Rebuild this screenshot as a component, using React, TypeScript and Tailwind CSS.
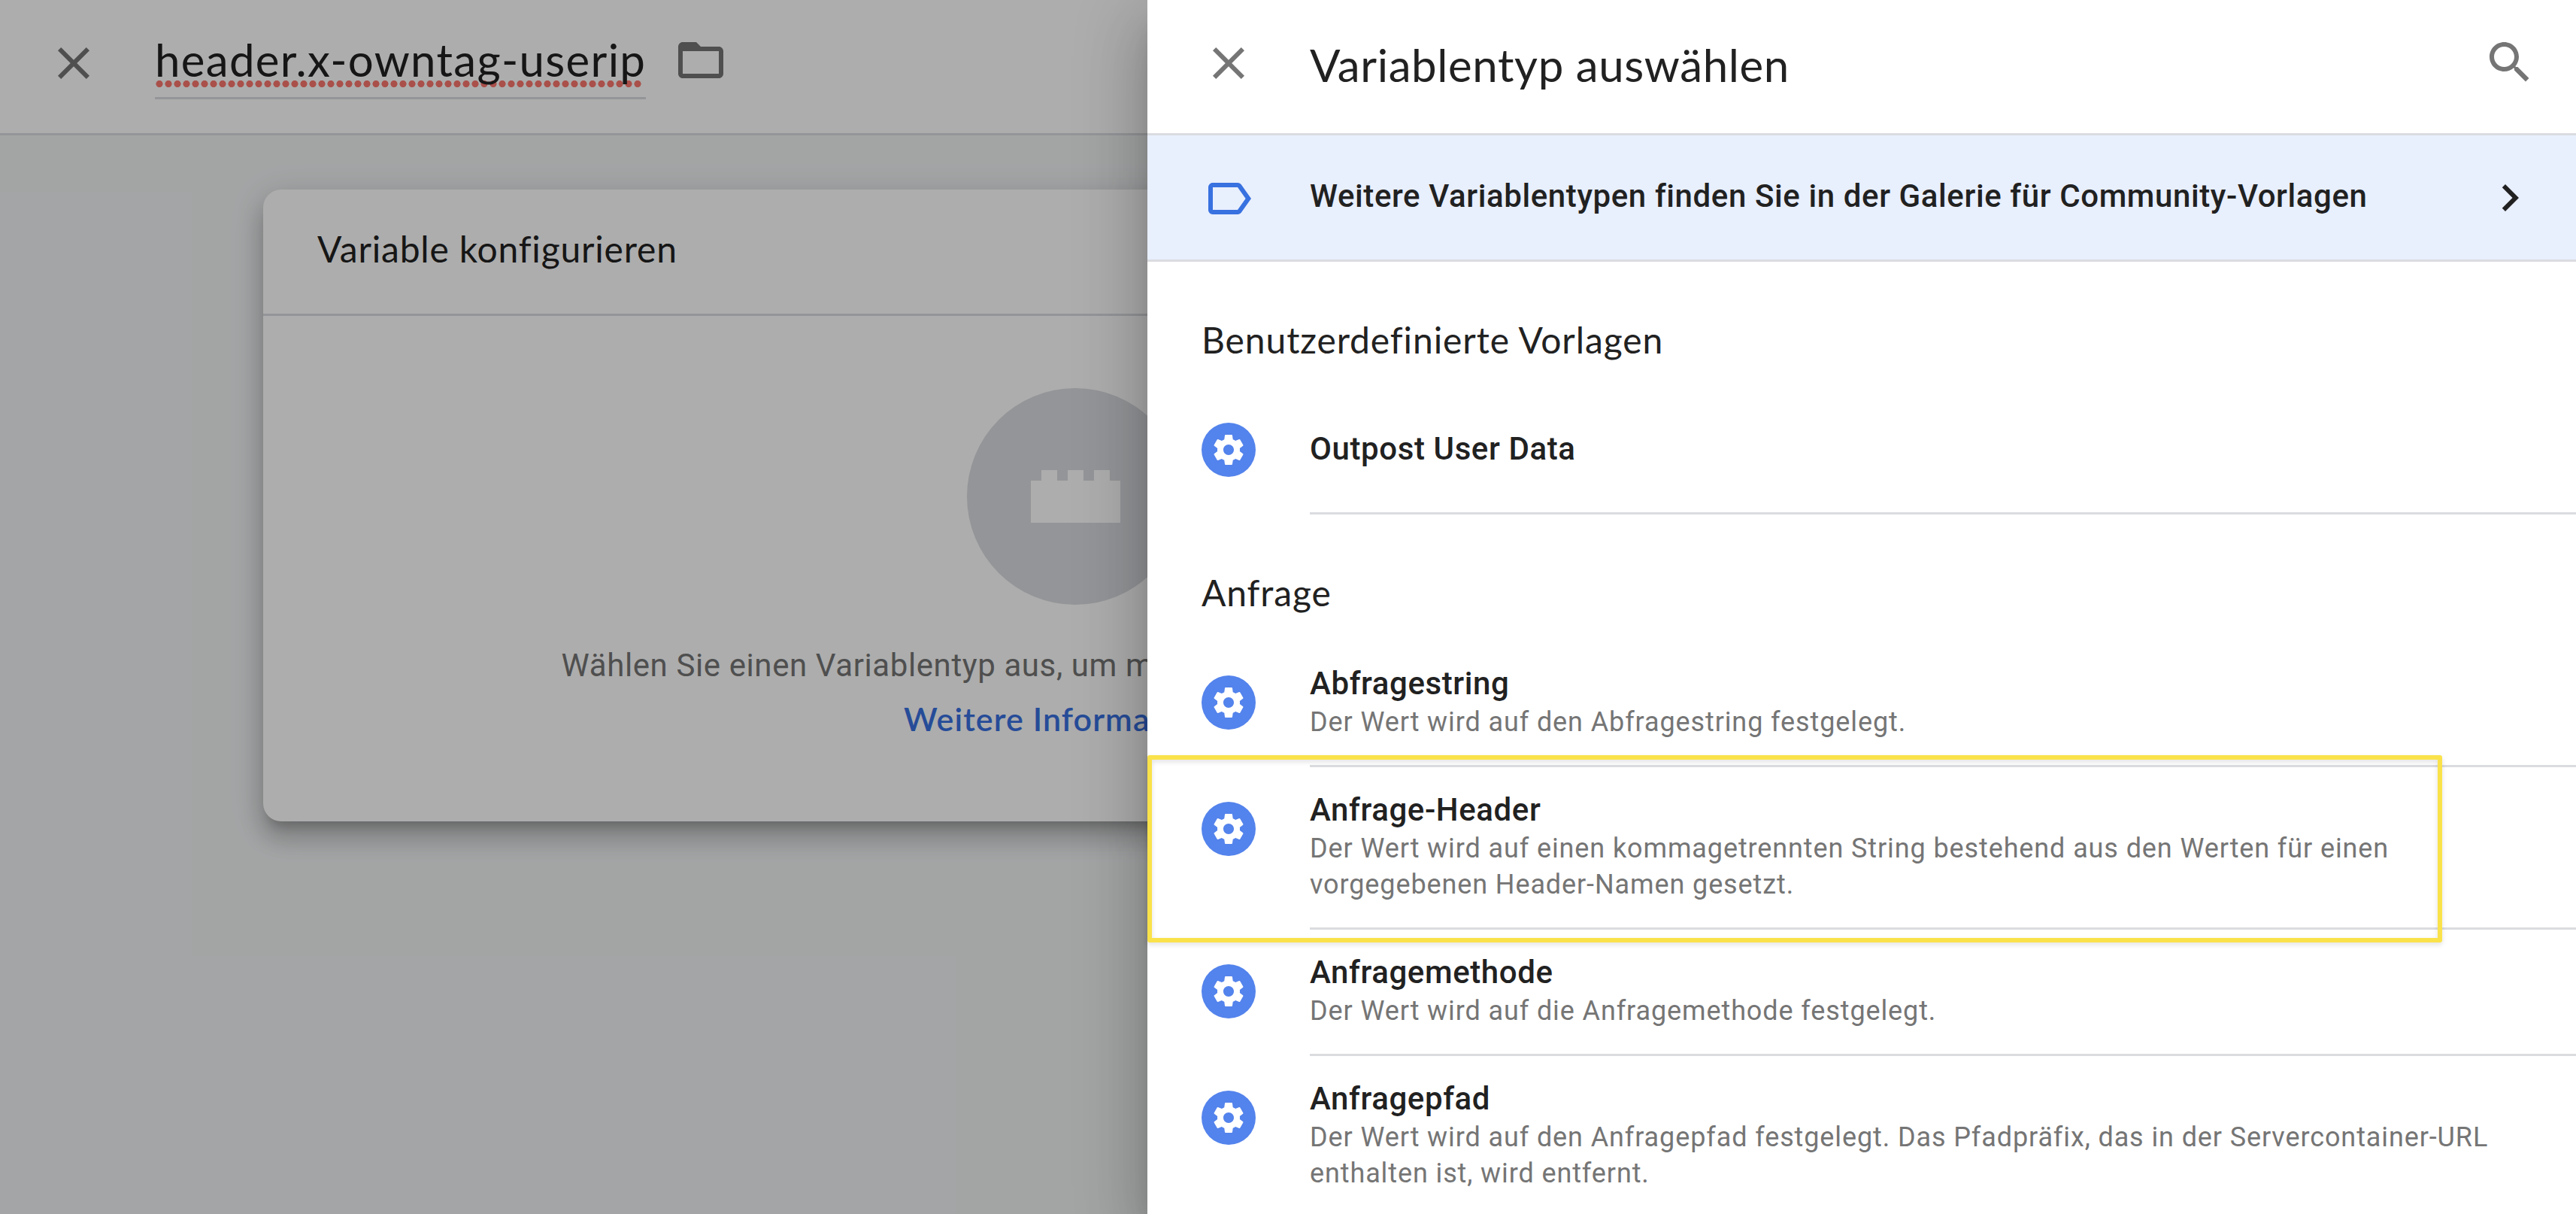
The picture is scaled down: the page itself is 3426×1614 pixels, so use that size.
import type { ReactNode } from 'react'

type VariableType = { name: string; description?: string }
type Section = { title: string; items: VariableType[] }

const sections: Section[] = [
  {
    title: 'Benutzerdefinierte Vorlagen',
    items: [{ name: 'Outpost User Data' }],
  },
  {
    title: 'Anfrage',
    items: [
      { name: 'Abfragestring', description: 'Der Wert wird auf den Abfragestring festgelegt.' },
      {
        name: 'Anfrage-Header',
        description:
          'Der Wert wird auf einen kommagetrennten String bestehend aus den Werten für einen vorgegebenen Header-Namen gesetzt.',
      },
      { name: 'Anfragemethode', description: 'Der Wert wird auf die Anfragemethode festgelegt.' },
      {
        name: 'Anfragepfad',
        description:
          'Der Wert wird auf den Anfragepfad festgelegt. Das Pfadpräfix, das in der Servercontainer-URL enthalten ist, wird entfernt.',
      },
    ],
  },
]

function Icon({ children, className }: { children: ReactNode; className: string }) {
  return (
    <svg viewBox="0 0 24 24" fill="currentColor" className={`shrink-0 ${className}`}>
      {children}
    </svg>
  )
}

function CloseIcon() {
  return (
    <Icon className="size-[72px] text-[#757575]">
      <path d="M19 6.41L17.59 5 12 10.59 6.41 5 5 6.41 10.59 12 5 17.59 6.41 19 12 13.41 17.59 19 19 17.59 13.41 12z" />
    </Icon>
  )
}

function GearBadge() {
  return (
    <span className="flex size-[72px] shrink-0 items-center justify-center rounded-full bg-[#5383ec]">
      <Icon className="size-12 text-white">
        <path d="M19.43 12.98c.04-.32.07-.64.07-.98s-.03-.66-.07-.98l2.11-1.65c.19-.15.24-.42.12-.64l-2-3.46c-.12-.22-.39-.3-.61-.22l-2.49 1c-.52-.4-1.08-.73-1.69-.98l-.38-2.65C14.46 2.18 14.25 2 14 2h-4c-.25 0-.46.18-.49.42l-.38 2.65c-.61.25-1.17.59-1.69.98l-2.49-1c-.23-.09-.49 0-.61.22l-2 3.46c-.13.22-.07.49.12.64l2.11 1.65c-.04.32-.07.65-.07.98s.03.66.07.98l-2.11 1.65c-.19.15-.24.42-.12.64l2 3.46c.12.22.39.3.61.22l2.49-1c.52.4 1.08.73 1.69.98l.38 2.65c.03.24.24.42.49.42h4c.25 0 .46-.18.49-.42l.38-2.65c.61-.25 1.17-.59 1.69-.98l2.49 1c.23.09.49 0 .61-.22l2-3.46c.12-.22.07-.49-.12-.64l-2.11-1.65zM12 15.5c-1.93 0-3.5-1.57-3.5-3.5s1.57-3.5 3.5-3.5 3.5 1.57 3.5 3.5-1.57 3.5-3.5 3.5z" />
      </Icon>
    </span>
  )
}

function Editor() {
  return (
    <div className="h-full w-[1526px] overflow-hidden bg-[#f1f3f4]">
      <header className="flex h-[180px] items-start border-b-[3px] border-[#dadce0] bg-white pl-[62px]">
        <div className="pt-12">
          <CloseIcon />
        </div>
        <div className="relative ml-[72px] h-[132px] w-[653px] border-b-[3px] border-[#dadce0] pt-[43px]">
          <div className="absolute top-[107px] left-0 h-[9px] w-[648px] bg-[radial-gradient(circle,#fb776e_4.2px,transparent_4.9px)] bg-[length:12px_9px]" />
          <h1 className="relative font-[Lato,sans-serif] text-[60px] leading-[72px] tracking-[1.3px] whitespace-nowrap">
            header.x-owntag-userip
          </h1>
        </div>
        <div className="pt-11 pl-[37px]">
          <Icon className="size-[72px] text-[#757575]">
            <path d="M20 6h-8l-2-2H4c-1.1 0-1.99.9-1.99 2L2 18c0 1.1.9 2 2 2h16c1.1 0 2-.9 2-2V8c0-1.1-.9-2-2-2zm0 12H4V8h16v10z" />
          </Icon>
        </div>
      </header>

      <section className="mt-[72px] ml-[350px] h-[840px] w-[2160px] rounded-3xl bg-white shadow-[0_15px_15px_-9px_rgba(0,0,0,0.2),0_24px_30px_3px_rgba(0,0,0,0.14),0_9px_42px_6px_rgba(0,0,0,0.12)]">
        <h2 className="flex h-[168px] items-center border-b-[3px] border-[#dadce0] pb-[7px] pl-[72px] font-[Lato,sans-serif] text-[48px] tracking-[0.8px]">
          Variable konfigurieren
        </h2>
        <div className="flex flex-col items-center pt-24">
          <div className="flex size-[288px] items-center justify-center rounded-full bg-[#dadce0]">
            <svg viewBox="0 0 17 10" className="h-[70px] w-[119px] fill-white">
              <path d="M0 2h2V0h3v2h2V0h3v2h2V0h3v2h2v8H0z" />
            </svg>
          </div>
          <p className="mt-[45px] text-[42px] leading-[72px] tracking-[0.6px] text-[#757575]">
            Wählen Sie einen Variablentyp aus, um mit dem Einrichten zu beginnen.
          </p>
          <a className="-mt-px font-[Lato,sans-serif] text-[43px] leading-[72px] font-semibold tracking-[1.1px] text-[#3871e0]">
            Weitere Informationen
          </a>
        </div>
      </section>
    </div>
  )
}

function TypeRow({ item }: { item: VariableType }) {
  return (
    <li className="flex pl-[72px]">
      <div className="pt-[46px]">
        <GearBadge />
      </div>
      <div
        className={`ml-[72px] min-h-[168px] flex-1 border-b-[3px] border-[#dadce0] pr-[90px] ${
          item.description ? 'pt-[30px] pb-[33px]' : 'pt-[54px]'
        }`}
      >
        <h4 className="text-[42px] leading-[54px] font-medium tracking-[0.6px]">{item.name}</h4>
        {item.description && (
          <p className="text-[36px] leading-[48px] tracking-[0.89px] text-[#757575]">{item.description}</p>
        )}
      </div>
    </li>
  )
}

function TypePicker() {
  return (
    <aside className="absolute inset-y-0 right-0 w-[1900px] bg-white shadow-[0_24px_30px_-15px_rgba(0,0,0,0.2),0_48px_72px_6px_rgba(0,0,0,0.14),0_18px_90px_15px_rgba(0,0,0,0.12)]">
      <header className="flex h-[180px] items-start border-b-[3px] border-[#dadce0] pr-[52px] pl-[72px]">
        <div className="pt-12">
          <CloseIcon />
        </div>
        <h2 className="ml-[72px] flex-1 pt-[50px] font-[Lato,sans-serif] text-[60px] leading-[72px] tracking-[0.6px]">
          Variablentyp auswählen
        </h2>
        <div className="pt-[47px]">
          <Icon className="size-[72px] text-[#757575]">
            <path d="M15.5 14h-.79l-.28-.27C15.41 12.59 16 11.11 16 9.5 16 5.91 13.09 3 9.5 3S3 5.91 3 9.5 5.91 16 9.5 16c1.61 0 3.09-.59 4.23-1.57l.27.28v.79l5 4.99L20.49 19l-4.99-5zm-6 0C7.01 14 5 11.99 5 9.5S7.01 5 9.5 5 14 7.01 14 9.5 11.99 14 9.5 14z" />
          </Icon>
        </div>
      </header>

      <a className="flex h-[168px] items-center border-b-[3px] border-[#dadce0] bg-[#e8effd] pr-[52px] pl-[72px]">
        <Icon className="mt-[3px] size-[72px] text-[#3871e0]">
          <path d="M17.63 5.84C17.27 5.33 16.67 5 16 5L5 5.01C3.9 5.01 3 5.9 3 7v10c0 1.1.9 1.99 2 1.99L16 19c.67 0 1.27-.33 1.63-.84L22 12l-4.37-6.16zM16 17H5V7h11l3.55 5L16 17z" />
        </Icon>
        <span className="ml-[72px] flex-1 pb-1 text-[42px] font-medium tracking-[0.6px]">
          Weitere Variablentypen finden Sie in der Galerie für Community-Vorlagen
        </span>
        <Icon className="size-[72px]">
          <path d="M10 6L8.59 7.41 13.17 12l-4.58 4.59L10 18l6-6z" />
        </Icon>
      </a>

      {sections.map((section) => (
        <section key={section.title}>
          <h3 className="h-[168px] pt-[74px] pl-[72px] font-[Lato,sans-serif] text-[48px] leading-[60px] tracking-[0.9px]">
            {section.title}
          </h3>
          <ul>
            {section.items.map((item) => (
              <TypeRow key={item.name} item={item} />
            ))}
          </ul>
        </section>
      ))}

      {/* marker around the "Anfrage-Header" row */}
      <div className="absolute top-[1004px] left-0 h-[249px] w-[1722px] rounded-[3px] border-[6px] border-[#fae24b] drop-shadow-[0_3px_3px_rgba(0,0,0,0.12)]" />
    </aside>
  )
}

export default function App() {
  return (
    <div className="relative h-[1614px] w-[3426px] overflow-hidden bg-[#f1f3f4] font-[Roboto,sans-serif] text-[#212121]">
      <Editor />
      <div className="absolute inset-0 bg-black/32" />
      <TypePicker />
    </div>
  )
}
